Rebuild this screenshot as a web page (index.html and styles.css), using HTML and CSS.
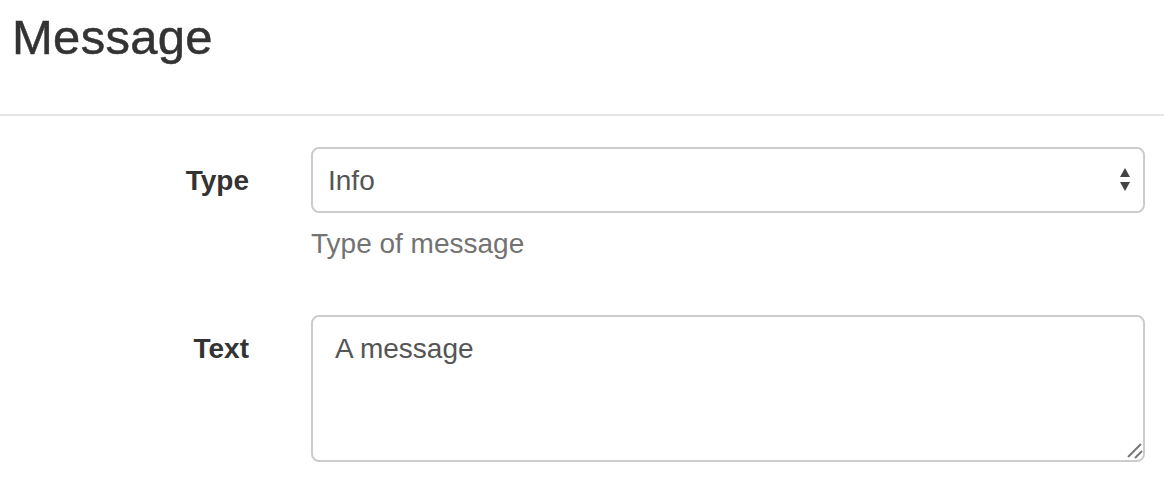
FILE: index.html
```html
<!DOCTYPE html>
<html>
<head>
<meta charset="utf-8">
<link rel="stylesheet" href="styles.css">
</head>
<body>
<div class="page">
  <h2 class="title">Message</h2>
  <form class="form">
    <div class="row">
      <label class="label" for="type">Type</label>
      <div class="field">
        <div class="select-wrap">
          <select id="type" class="control select">
            <option>Info</option>
            <option>Warning</option>
            <option>Error</option>
          </select>
          <svg class="arrows" width="12" height="26" viewBox="0 0 12 26" aria-hidden="true">
            <polygon points="6,0 11,9 1,9" fill="#444"/>
            <polygon points="1,14 11,14 6,23" fill="#444"/>
          </svg>
        </div>
        <p class="help">Type of message</p>
      </div>
    </div>
    <div class="row">
      <label class="label" for="text">Text</label>
      <div class="field">
        <div class="area-wrap">
          <textarea id="text" class="control area">A message</textarea>
          <svg class="grip" width="16" height="16" viewBox="0 0 16 16" aria-hidden="true">
            <line x1="1" y1="14" x2="14" y2="1" stroke="#777" stroke-width="2"/>
            <line x1="8" y1="15" x2="15" y2="8" stroke="#777" stroke-width="2"/>
          </svg>
        </div>
      </div>
    </div>
  </form>
</div>
</body>
</html>
```

FILE: styles.css
```css
html, body {
  margin: 0;
  padding: 0;
  background: #fff;
}
body {
  font-family: "Liberation Sans", Arial, sans-serif;
  color: #333;
}
.page {
  width: 1164px;
}
.title {
  margin: 0;
  padding: 11px 0 51px 12px;
  font-size: 49px;
  line-height: 52px;
  font-weight: normal;
  letter-spacing: 0.3px;
  -webkit-text-stroke: 0.5px #333;
  color: #333;
  border-bottom: 2px solid #e5e5e5;
}
.form {
  padding: 31px 19px 0 0;
  display: flex;
  flex-direction: column;
  gap: 51px;
}
.row {
  display: grid;
  grid-template-columns: 249px 1fr;
  column-gap: 62px;
}
.label {
  text-align: right;
  font-weight: bold;
  font-size: 28px;
  line-height: 40px;
  padding-top: 14px;
  color: #333;
}
.field {
  display: flex;
  flex-direction: column;
}
.control {
  box-sizing: border-box;
  width: 100%;
  border: 2px solid #ccc;
  border-radius: 8px;
  background: #fff;
  font-family: "Liberation Sans", Arial, sans-serif;
  font-size: 28px;
  color: #555;
  margin: 0;
  outline: none;
}
.select-wrap, .area-wrap {
  position: relative;
}
.select {
  -webkit-appearance: none;
  appearance: none;
  height: 66px;
  padding: 0 40px 0 15px;
}
.arrows {
  position: absolute;
  right: 14px;
  top: 21px;
  pointer-events: none;
}
.help {
  margin: 11px 0 0 0;
  font-size: 28px;
  line-height: 40px;
  color: #737373;
}
.area {
  display: block;
  height: 147px;
  padding: 12px 22px 10px;
  line-height: 40px;
  resize: none;
}
.grip {
  position: absolute;
  right: 2px;
  bottom: 3px;
  pointer-events: none;
}
```
